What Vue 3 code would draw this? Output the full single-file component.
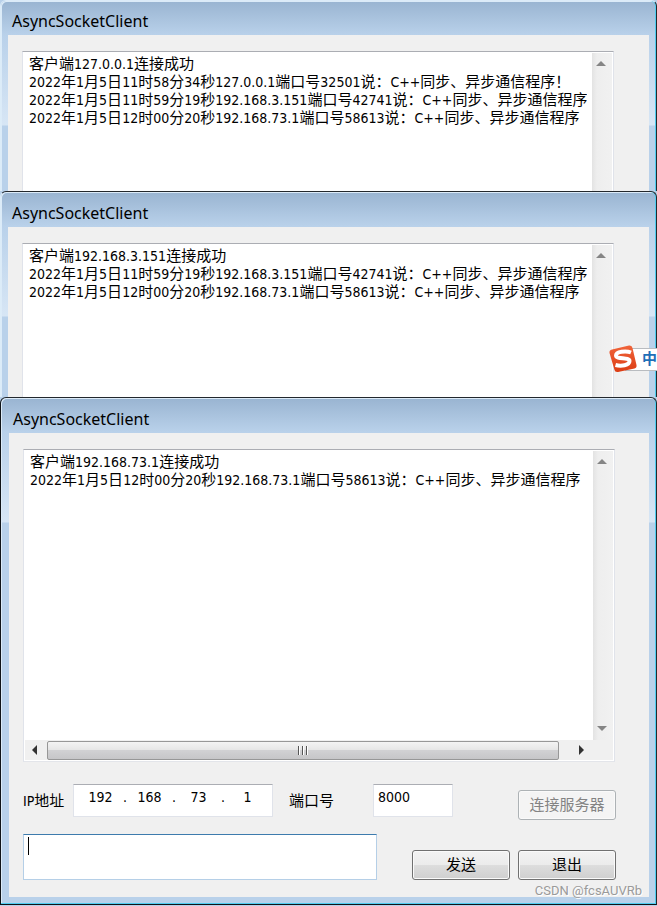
<template>
  <div class="desktop">
    <section
      v-for="(win, i) in windows"
      :key="i"
      class="window"
      :class="win.kind"
    >
      <header class="title-bar">{{ win.title }}</header>
      <div class="client">
        <div class="log">
          <div class="log-main">
            <div class="log-text" role="log">
              <p v-for="(line, n) in win.lines" :key="n" class="log-line">
                <span
                  v-for="(run, k) in splitRuns(line)"
                  :key="k"
                  :class="{ latin: run.latin }"
                >{{ run.text }}</span>
              </p>
            </div>
            <div class="scroll-v">
              <svg class="arrow" viewBox="0 0 10 6"><path d="M0 6L5 1L10 6Z" fill="#858585" /></svg>
              <svg v-if="win.form" class="arrow" viewBox="0 0 10 6"><path d="M0 0L5 5L10 0Z" fill="#858585" /></svg>
            </div>
          </div>
          <div v-if="win.form" class="scroll-h">
            <svg class="arrow-h left" viewBox="0 0 6 10"><path d="M6 0L1 5L6 10Z" fill="#333" /></svg>
            <div class="thumb"><i></i><i></i><i></i></div>
            <svg class="arrow-h right" viewBox="0 0 6 10"><path d="M0 0L5 5L0 10Z" fill="#333" /></svg>
          </div>
        </div>

        <form v-if="win.form" class="form" @submit.prevent="send">
          <div class="row">
            <label class="ip-label" for="ip0"><span class="latin">IP</span>地址</label>
            <div class="ip-box">
              <template v-for="(part, p) in ip" :key="p">
                <span v-if="p > 0" class="dot">.</span>
                <input
                  :id="'ip' + p"
                  v-model="ip[p]"
                  class="ip-part"
                  type="text"
                  maxlength="3"
                  :aria-label="'IP地址 ' + (p + 1)"
                />
              </template>
            </div>
            <label class="port-label" for="port">端口号</label>
            <input id="port" v-model="port" class="port" type="text" />
            <button class="btn connect" type="button" disabled>连接服务器</button>
          </div>
          <div class="row">
            <div class="message">
              <textarea v-model="message" class="message-input" aria-label="消息"></textarea>
              <span class="caret"></span>
            </div>
            <button class="btn send" type="submit">发送</button>
            <button class="btn" type="button">退出</button>
          </div>
        </form>
      </div>

      <!-- 输入法悬浮条 -->
      <div v-if="win.kind === 'second'" class="ime">
        <svg class="ime-logo" viewBox="0 0 28 28">
          <defs>
            <linearGradient id="ime-red" x1="0" y1="0" x2="0" y2="1">
              <stop offset="0" stop-color="#f0643a" />
              <stop offset="1" stop-color="#dc3d14" />
            </linearGradient>
          </defs>
          <path d="M3 4.500L20 .5Q23 0 23.500 3L27.500 20Q28 22.500 25.500 23.500L9 27Q6 27.500 5.500 25L.5 8Q0 5 3 4.500Z" fill="url(#ime-red)" />
          <path d="M22 7.500C17 5.500 7 6.500 7 10.500C7 14.500 20.500 12 20.500 16C20.500 20.500 12 21.500 6.500 20" fill="none" stroke="#fff" stroke-width="4" />
        </svg>
        <span class="ime-mode">中</span>
      </div>
      <span v-if="win.form" class="watermark">CSDN @fcsAUVRb</span>
    </section>
  </div>
</template>

<script setup>
import { ref } from 'vue'

const windows = [
  {
    title: 'AsyncSocketClient',
    kind: 'first',
    lines: [
      '客户端127.0.0.1连接成功',
      '2022年1月5日11时58分34秒127.0.0.1端口号32501说：C++同步、异步通信程序！',
      '2022年1月5日11时59分19秒192.168.3.151端口号42741说：C++同步、异步通信程序',
      '2022年1月5日12时00分20秒192.168.73.1端口号58613说：C++同步、异步通信程序'
    ]
  },
  {
    title: 'AsyncSocketClient',
    kind: 'second',
    lines: [
      '客户端192.168.3.151连接成功',
      '2022年1月5日11时59分19秒192.168.3.151端口号42741说：C++同步、异步通信程序',
      '2022年1月5日12时00分20秒192.168.73.1端口号58613说：C++同步、异步通信程序'
    ]
  },
  {
    title: 'AsyncSocketClient',
    kind: 'third',
    form: true,
    lines: [
      '客户端192.168.73.1连接成功',
      '2022年1月5日12时00分20秒192.168.73.1端口号58613说：C++同步、异步通信程序'
    ]
  }
]

const ip = ref(['192', '168', '73', '1'])
const port = ref('8000')
const message = ref('')

// 西文和中文分段，西文用小一号的字
const splitRuns = (line) =>
  line.match(/[\x20-\x7e]+|[^\x20-\x7e]+/g).map((text) => ({
    text,
    latin: /^[\x20-\x7e]/.test(text)
  }))

const send = () => {
  message.value = ''
}
</script>

<style>
body {
  margin: 0;
  background: #b9d1ea;
}
</style>

<style scoped>
.desktop {
  font-family: "DejaVu Sans Condensed", "Noto Sans CJK SC", sans-serif;
  font-size: 15px;
  line-height: 18px;
  color: #000;
}

.window {
  position: relative;
  display: flex;
  flex-direction: column;
  box-sizing: border-box;
  padding: 0 7px;
  border: 1px solid #23282d;
  border-left-color: #dcecf8;
  border-bottom: none;
  border-radius: 6px 6px 0 0;
  box-shadow: inset -1px 0 #4fcdf0, inset 1px 1px #dcebf8;
  background: linear-gradient(#99b4d1, #b9d1ea 34px, #d7e6f5 124px, #b9d1ea 125px);
}

.first {
  min-height: 191px;
  border-top-color: #dcebf8;
}

.second {
  min-height: 206px;
}

.third {
  padding-left: 8px;
  padding-bottom: 7px;
  border-left-color: #101418;
  border-bottom: 1px solid #101418;
  box-shadow: inset -1px -1px #4fcdf0, inset 1px 1px #dcebf8;
}

.title-bar {
  height: 35px;
  box-sizing: border-box;
  padding: 11px 4px 0;
  font-family: "Noto Sans", sans-serif;
  font-size: 16px;
  line-height: 20px;
}

.first .title-bar {
  height: 34px;
  padding-top: 10px;
}

.client {
  flex: 1;
  display: flex;
  flex-direction: column;
  padding: 16px 35px 0 14px;
  background: #f0f0f0;
}

.third .client {
  padding-right: 34px;
}

.log {
  flex: 1;
  display: flex;
  flex-direction: column;
  box-sizing: border-box;
  border: 1px solid #e0e3ea;
  border-top-color: #abadb3;
  border-bottom: none;
  background: #fff;
}

.third .log {
  min-height: 313px;
  border-bottom: 1px solid #e3e5ea;
  padding-bottom: 1px;
}

.log-main {
  flex: 1;
  display: flex;
  padding: 1px 1px 0 0;
}

.log-text {
  flex: 1;
  min-width: 0;
  overflow: hidden;
  margin: 2px 5px 0 6px;
}

.log-line {
  margin: 0;
  white-space: nowrap;
  height: 18px;
}

.latin {
  font-size: 14px;
}

.scroll-v {
  width: 20px;
  box-sizing: border-box;
  display: flex;
  flex-direction: column;
  justify-content: space-between;
  align-items: center;
  padding: 7px 2px 8px 0;
  background: linear-gradient(90deg, #e3e3e3, #eee 5px, #f1f1f1);
}

.arrow {
  width: 10px;
  height: 6px;
}

.scroll-h {
  display: flex;
  align-items: center;
  height: 20px;
  margin: 0 1px;
  padding-right: 20px;
  background: #f0f0f0;
}

.arrow-h {
  width: 6px;
  height: 10px;
}

.left {
  margin: 0 10px 0 6px;
}

.right {
  margin: 0 8px 0 20px;
}

.thumb {
  flex: 1;
  display: flex;
  justify-content: center;
  align-items: center;
  gap: 2px;
  height: 19px;
  box-sizing: border-box;
  border: 1px solid #979797;
  border-radius: 2px;
  background: linear-gradient(#f3f3f3, #e6e6e6 45%, #d2d2d4 46%, #c6c6c8);
}

.thumb i {
  width: 2px;
  height: 9px;
  background: linear-gradient(90deg, #555 50%, #fff 50%);
}

.form {
  display: flex;
  flex-direction: column;
  gap: 14px;
  margin-right: -1px;
  padding: 22px 0 17px;
}

.row {
  display: flex;
  align-items: flex-start;
}

.ip-label,
.port-label {
  width: 50px;
  padding-top: 8px;
  white-space: nowrap;
}

.port-label {
  width: 84px;
  margin-left: 16px;
}

.ip-box,
.port {
  box-sizing: border-box;
  height: 33px;
  border: 1px solid #e0e3ea;
  border-top-color: #abadb3;
  background: #fff;
}

.ip-box {
  display: flex;
  width: 200px;
  padding: 3px 4px;
}

.ip-part {
  width: 45px;
  height: 18px;
  box-sizing: border-box;
  padding: 0;
  border: none;
  background: none;
  font: inherit;
  font-size: 14px;
  text-align: center;
  outline: none;
}

.dot {
  width: 4px;
  font-size: 14px;
}

.port {
  width: 80px;
  padding: 0 4px 7px;
  font: inherit;
  font-size: 14px;
}

.btn {
  width: 98px;
  height: 30px;
  padding: 0;
  align-self: flex-end;
  border: 1px solid #707070;
  border-radius: 3px;
  box-shadow: inset 0 0 0 1px #fafafa;
  background: linear-gradient(#f2f2f2, #ebebeb 50%, #dddddd 51%, #cfcfcf);
  font: inherit;
  color: #000;
}

.btn:disabled {
  border-color: #adb2b5;
  background: #f4f4f4;
  color: #838383;
}

.connect {
  margin: 6px 0 0 auto;
}

.message {
  position: relative;
  flex: 1;
  height: 46px;
}

.message-input {
  display: block;
  width: 100%;
  height: 100%;
  box-sizing: border-box;
  padding: 3px 5px;
  border: 1px solid #b5cfe7;
  border-top-color: #3d7bad;
  background: #fff;
  font: inherit;
  resize: none;
  outline: none;
}

.caret {
  position: absolute;
  left: 5px;
  top: 3px;
  width: 1px;
  height: 18px;
  background: #000;
}

.send {
  margin: 0 8px 0 35px;
}

.ime {
  position: absolute;
  right: -1px;
  top: 153px;
  display: flex;
  align-items: center;
}

.ime-logo {
  position: relative;
  z-index: 1;
  width: 28px;
  height: 28px;
}

.ime-mode {
  box-sizing: border-box;
  width: 32px;
  height: 23px;
  margin-left: -12px;
  padding-left: 16px;
  border: 1px solid #b9bcc0;
  border-right: none;
  background: #fff;
  color: #1f6fb8;
  font-weight: bold;
  line-height: 21px;
}

.watermark {
  position: absolute;
  right: 14px;
  bottom: 4px;
  font-family: Roboto, sans-serif;
  font-size: 13px;
  color: #9a9a9a;
  text-shadow: 1px 1px #fff;
}
</style>
